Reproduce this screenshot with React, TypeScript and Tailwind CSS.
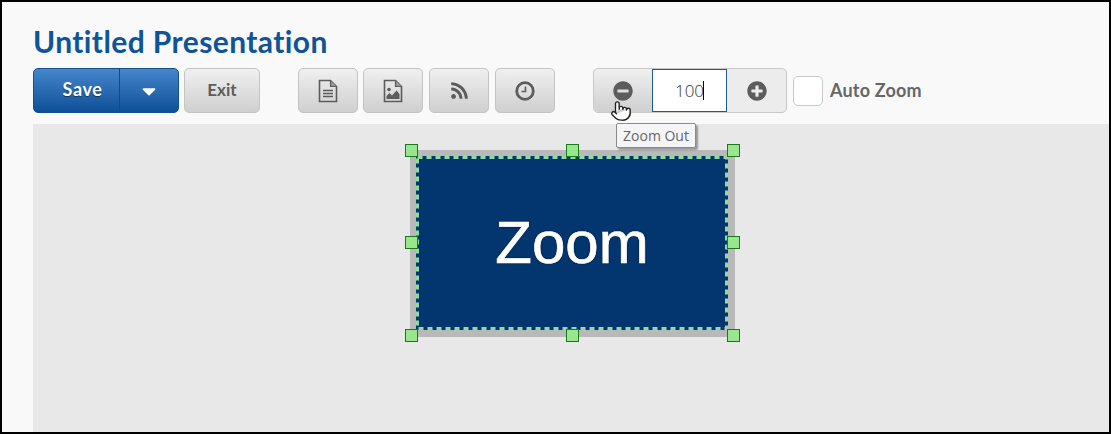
import { FaCaretDown, FaMinusCircle, FaPlusCircle, FaRss } from 'react-icons/fa'
import { Pointer } from 'lucide-react'

const btn = 'flex h-[45px] items-center justify-center rounded-[5px] border border-[#c4c4c4] bg-gradient-to-b from-[#f0f0f0] to-[#cfcfcf] text-[#5c5c5c]'

// corner and edge handles, [left, top] inside the canvas
const handles = [
  [372, 20], [533, 20], [694, 20],
  [372, 112], [694, 112],
  [372, 205], [533, 205], [694, 205],
]

function DocIcon() {
  return (
    <svg width="20" height="24" viewBox="0 0 20 24" fill="none" stroke="#5c5c5c" strokeWidth="1.6">
      <path d="M1.5 1.5h11l6 6v15h-17z" />
      <path d="M12.5 1.5v6h6" fill="#9a9a9a" strokeWidth="1.2" />
      <path d="M5 11.5h10M5 14.5h10M5 17.5h10" strokeWidth="1.4" />
    </svg>
  )
}

function ImageDocIcon() {
  return (
    <svg width="20" height="24" viewBox="0 0 20 24" fill="none" stroke="#5c5c5c" strokeWidth="1.6">
      <path d="M1.5 1.5h11l6 6v15h-17z" />
      <path d="M12.5 1.5v6h6" fill="#9a9a9a" strokeWidth="1.2" />
      <circle cx="6" cy="10.5" r="1.8" fill="#5c5c5c" stroke="none" />
      <path d="M3.5 20v-3l3-3 2.5 2.5 4.5-5 3 3.5v5z" fill="#5c5c5c" stroke="none" />
    </svg>
  )
}

function ClockIcon() {
  return (
    <svg width="20" height="20" viewBox="0 0 20 20" fill="none" stroke="#5c5c5c">
      <circle cx="10" cy="10" r="8.3" strokeWidth="2.8" />
      <path d="M10.5 5.5v5H6.5" strokeWidth="1.6" />
    </svg>
  )
}

export default function App() {
  return (
    <main className="flex h-[434px] w-[1111px] flex-col overflow-hidden border-2 border-black bg-[#f9f9f9] font-['Lato',sans-serif]">
      <div className="pl-[31px] pt-[21px]">
        <h1 className="text-[30px] font-bold leading-[36px] tracking-[0.4px] text-[#0f5398]">Untitled Presentation</h1>
        <div className="mt-[9px] flex h-[45px] items-center">
          <div className="flex h-[45px] w-[146px] rounded-[5px] border border-[#0f4f92] bg-gradient-to-b from-[#4487cc] to-[#0c4f98] text-white">
            <div className="flex w-[85px] items-center justify-center pb-0.5 pl-3 text-[18px] font-bold tracking-[0.6px] [text-shadow:0_1px_1px_rgba(0,0,0,0.5)]">Save</div>
            <div className="flex flex-1 items-center justify-center border-l border-[#0f4a8a]">
              <FaCaretDown size={22} />
            </div>
          </div>
          <button className={`${btn} ml-[5px] w-[76px] pb-0.5 text-[17px] font-bold`}>Exit</button>
          <button className={`${btn} ml-[38px] w-[60px]`}><DocIcon /></button>
          <button className={`${btn} ml-[5px] w-[60px]`}><ImageDocIcon /></button>
          <button className={`${btn} ml-[6px] w-[60px]`}><FaRss size={19} /></button>
          <button className={`${btn} ml-[6px] w-[60px]`}><ClockIcon /></button>
          <div className="ml-[38px] flex h-[45px] w-[194px] rounded-[5px] border border-[#c8c8c8] bg-[#ececec]">
            <div className="flex w-[58px] items-center justify-center rounded-l-[5px] bg-gradient-to-b from-[#f0f0f0] to-[#cfcfcf] text-[#5c5c5c]">
              <FaMinusCircle size={20} />
            </div>
            <div className="flex w-[75px] items-center justify-center border border-[#1d5a92] bg-white text-[17px] font-light text-[#333] font-['Open_Sans',sans-serif]">
              100<span className="ml-[-1px] h-[19px] w-px bg-black" />
            </div>
            <div className="flex flex-1 items-center justify-center text-[#5c5c5c]">
              <FaPlusCircle size={20} />
            </div>
          </div>
          <div className="ml-[6px] h-[30px] w-[30px] rounded-[5px] border border-[#c8c8c8] bg-white" />
          <span className="ml-[7px] text-[18px] font-bold tracking-[0.2px] text-[#666]">Auto Zoom</span>
        </div>
      </div>

      <div className="relative ml-[31px] mt-[11px] flex-1 bg-[#e8e8e8]">
        {/* selected slide object */}
        <div className="absolute left-[377px] top-[26px] h-[187px] w-[325px] border-[6px] border-b-[7px] border-r-[7px] border-[#b9b9b9] bg-white">
          <div className="relative flex h-full w-full items-center justify-center bg-[#03366f]">
            <span className="text-[60px] leading-none text-white [-webkit-text-stroke:0.7px_white] [text-shadow:0_0_2px_#000] font-['Liberation_Sans',sans-serif]">Zoom</span>
            <svg className="absolute inset-0 h-full w-full" fill="none">
              <rect x="1.5" y="1.5" width="309" height="171" stroke="#8fdc9c" strokeWidth="3" strokeDasharray="5 4" />
            </svg>
          </div>
        </div>
        {handles.map(([x, y]) => (
          <div
            key={`${x}-${y}`}
            className="absolute h-[13px] w-[13px] border border-[#1a7a1a] bg-[#98e68e]"
            style={{ left: x, top: y }}
          />
        ))}
        {/* tooltip and cursor */}
        <div className="absolute left-[583px] top-[-1px] flex h-[25px] w-[80px] items-center justify-center rounded-[2px] border border-[#8a8a8a] bg-[#f5f5f8] text-[14px] text-[#666] shadow-[2px_2px_2px_rgba(0,0,0,0.35)] font-['Open_Sans',sans-serif]">
          Zoom Out
        </div>
        <div className="absolute left-[577px] top-[-24px]">
          <Pointer size={22} fill="white" stroke="#222" strokeWidth={1.5} />
        </div>
      </div>
    </main>
  )
}
